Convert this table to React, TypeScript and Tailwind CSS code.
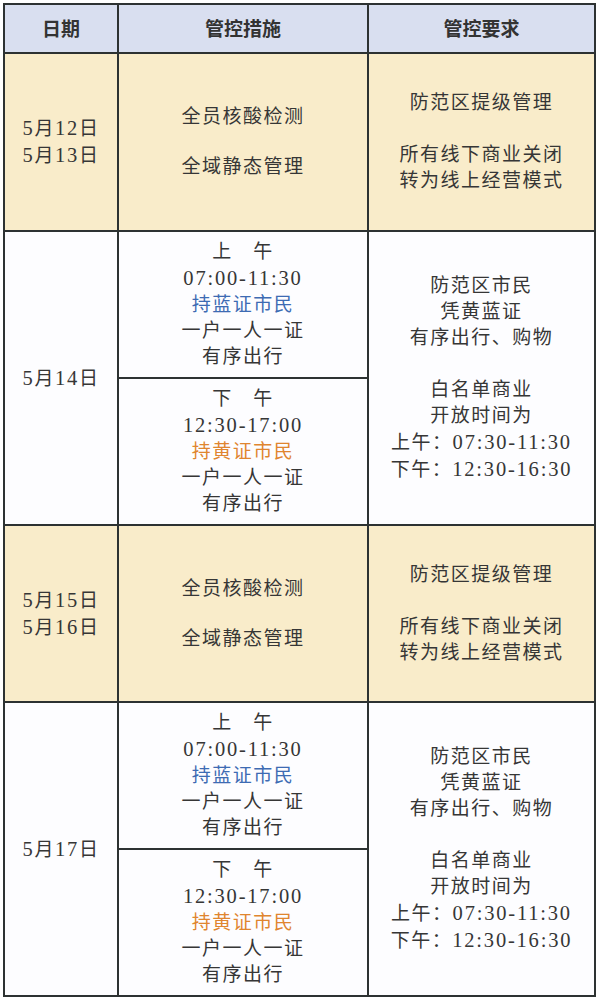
import type React from "react"

const font = { fontFamily: '"Liberation Serif", "Noto Sans CJK SC", serif' }

function Lines({ lines, className = "" }: { lines: React.ReactNode[]; className?: string }) {
  return (
    <div className={`flex flex-col items-center text-[19px] leading-[26px] tracking-[1.5px] text-[#363636] ${className}`}>
      {lines.map((l, i) => (
        <div key={i} className="whitespace-pre">
          {l === "" ? "\u00a0" : l}
        </div>
      ))}
    </div>
  )
}

// digits look a touch bigger than the CJK glyphs in the original
function Num({ children }: { children: React.ReactNode }) {
  return <span className="text-[20.5px] tracking-[1.8px]">{children}</span>
}

function Slot({ am }: { am: boolean }) {
  return (
    <Lines
      lines={[
        am ? "上　午" : "下　午",
        <Num>{am ? "07:00-11:30" : "12:30-17:00"}</Num>,
        <span className={am ? "text-[#3d6bb3]" : "text-[#e0852f]"}>
          {am ? "持蓝证市民" : "持黄证市民"}
        </span>,
        "一户一人一证",
        "有序出行",
      ]}
    />
  )
}

function Date({ d }: { d: string }) {
  const [m, rest] = d.split("月")
  return (
    <>
      <Num>{m}</Num>月<Num>{rest.replace("日", "")}</Num>日
    </>
  )
}

function StrictRow({ dates, h }: { dates: string[]; h: string }) {
  return (
    <div className={`grid grid-cols-[112px_250px_1fr] border-t-2 border-[#2d3232] bg-[#f9ecca] ${h}`}>
      <div className="flex items-center justify-center">
        <Lines lines={dates.map((d) => <Date d={d} />)} />
      </div>
      <div className="flex flex-col items-center justify-center gap-6 border-l-2 border-[#2d3232]">
        <Lines lines={["全员核酸检测"]} />
        <Lines lines={["全域静态管理"]} />
      </div>
      <div className="flex items-center justify-center border-l-2 border-[#2d3232]">
        <Lines lines={["防范区提级管理", "", "所有线下商业关闭", "转为线上经营模式"]} />
      </div>
    </div>
  )
}

function OpenRow({ date, h }: { date: string; h: string }) {
  return (
    <div className={`grid grid-cols-[112px_250px_1fr] border-t-2 border-[#2d3232] bg-[#fdfdff] ${h}`}>
      <div className="flex items-center justify-center">
        <Lines lines={[<Date d={date} />]} />
      </div>
      <div className="flex flex-col border-l-2 border-[#2d3232]">
        <div className="flex flex-1 items-center justify-center">
          <Slot am />
        </div>
        <div className="flex flex-1 items-center justify-center border-t-2 border-[#2d3232]">
          <Slot am={false} />
        </div>
      </div>
      <div className="flex items-center justify-center border-l-2 border-[#2d3232]">
        <Lines
          lines={[
            "防范区市民",
            "凭黄蓝证",
            "有序出行、购物",
            "",
            "白名单商业",
            "开放时间为",
            <>上午：<Num>07:30-11:30</Num></>,
            <>下午：<Num>12:30-16:30</Num></>,
          ]}
        />
      </div>
    </div>
  )
}

export default function App() {
  const head = { fontFamily: '"Noto Sans CJK SC", sans-serif' }
  return (
    <div className="w-[599px] h-[1000px] bg-white pt-[3px] pl-[3px]" style={font}>
      <div className="w-[593px] border-2 border-[#2d3232]">
        <div className="grid h-[47px] grid-cols-[112px_250px_1fr] bg-[#d9dff0] text-[19px] font-bold text-[#333]">
          <div className="flex items-center justify-center" style={head}>
            日期
          </div>
          <div className="flex items-center justify-center border-l-2 border-[#2d3232]" style={head}>
            管控措施
          </div>
          <div className="flex items-center justify-center border-l-2 border-[#2d3232]" style={head}>
            管控要求
          </div>
        </div>
        <StrictRow dates={["5月12日", "5月13日"]} h="h-[178px]" />
        <OpenRow date="5月14日" h="h-[294px]" />
        <StrictRow dates={["5月15日", "5月16日"]} h="h-[177px]" />
        <OpenRow date="5月17日" h="h-[294px]" />
      </div>
    </div>
  )
}
